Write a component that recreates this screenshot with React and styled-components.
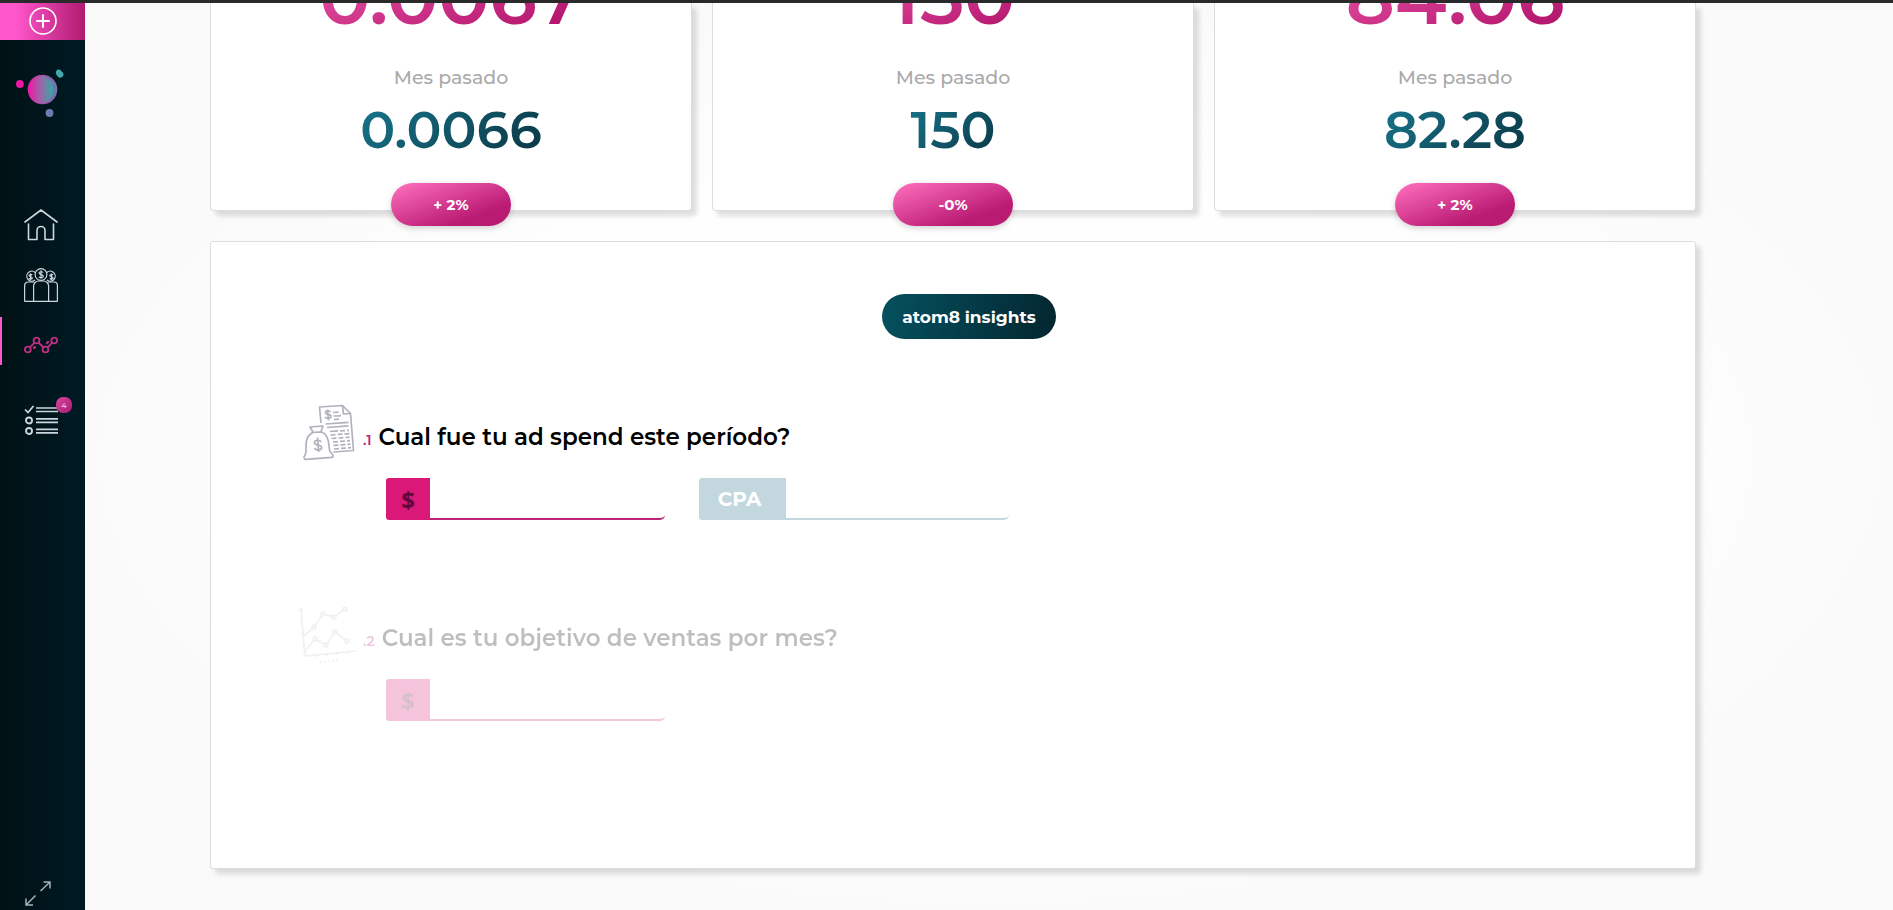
import React from "react";
import styled, { createGlobalStyle, css } from "styled-components";

const Global = createGlobalStyle`
  *, *::before, *::after { box-sizing: border-box; }
  body {
    margin: 0;
    background: #fafafa;
    font-family: Montserrat, Inter, "Open Sans", sans-serif;
    color: #000;
  }
  button, input { font: inherit; }
  h2, p { margin: 0; }
`;

const Page = styled.div`
  display: grid;
  grid-template-columns: 85px minmax(0, 1fr);
  height: 100vh;
  overflow: hidden;
  border-top: 3px solid #2a2a2a;
`;

const Sidebar = styled.aside`
  display: flex;
  flex-direction: column;
  align-items: stretch;
  min-height: 0;
  background: linear-gradient(90deg, #001114, #001a24);
`;

const AddButton = styled.button`
  display: flex;
  justify-content: center;
  align-items: flex-start;
  height: 37px;
  padding: 4px 0 0;
  border: 0;
  color: #fff;
  background: linear-gradient(90deg, #ff56cc 18%, #b01b70);
`;

const Logo = styled.a`
  display: flex;
  justify-content: center;
  margin: 24px 0 83px;
`;

const Nav = styled.nav`
  display: flex;
  flex-direction: column;
`;

const NavLink = styled.a`
  display: flex;
  align-items: center;
  height: 48px;
  margin-bottom: ${(p) => p.$gap}px;
  padding-top: ${(p) => (p.$active ? 8 : 0)}px;
  padding-left: ${(p) => (p.$active ? 22 : 24)}px;
  border-left: ${(p) => (p.$active ? "2px solid #ff56cc" : "0")};
  color: ${(p) => (p.$active ? "#b8307f" : "#ccd6dc")};
`;

const IconWrap = styled.span`
  position: relative;
  display: flex;
`;

const Count = styled.span`
  position: absolute;
  top: -8px;
  right: -14px;
  width: 16px;
  height: 16px;
  border-radius: 7px;
  background: linear-gradient(135deg, #d9449f, #a81c72);
  color: #f0a8d3;
  font-size: 8px;
  font-weight: 600;
  line-height: 16px;
  text-align: center;
`;

const ExpandButton = styled.button`
  display: flex;
  margin-top: auto;
  padding: 0 0 4px 25px;
  border: 0;
  background: none;
  color: #a4b1b6;
`;

const Main = styled.main`
  display: flex;
  flex-direction: column;
  gap: 30px;
  min-width: 0;
  padding: 0 197px 40px 125px;
  background: radial-gradient(ellipse at 50% 50%, #fefefe 45%, #fafafa 72%);
`;

const surface = css`
  border: 1px solid #dcdddd;
  background: #fff;
  box-shadow: 5px 5px 5px rgba(0, 0, 0, 0.13);
`;

const Metrics = styled.section`
  display: grid;
  grid-template-columns: repeat(3, minmax(0, 1fr));
  gap: 20px;
`;

const Metric = styled.article`
  ${surface}
  display: flex;
  flex-direction: column;
  align-items: center;
  height: 208px;
  border-top: 0;
  border-radius: 0 0 4px 4px;
`;

const gradientText = css`
  background-clip: text;
  -webkit-background-clip: text;
  color: transparent;
`;

const Current = styled.p`
  ${gradientText}
  margin-top: -62px;
  background-image: linear-gradient(160deg, #f25fb0, #b5186f 80%);
  font-size: 76px;
  font-weight: 600;
  line-height: 112px;
`;

const Label = styled.p`
  margin-top: 11px;
  color: #aaa;
  font-size: 19px;
  font-weight: 500;
  line-height: 28px;
`;

const Previous = styled.p`
  ${gradientText}
  margin-top: 8px;
  background-image: linear-gradient(135deg, #18768c, #0a3543);
  font-size: 52px;
  font-weight: 600;
  line-height: 60px;
`;

const Change = styled.span`
  width: 25%;
  height: 43px;
  margin-top: 23px;
  flex: none;
  border-radius: 22px;
  background: linear-gradient(160deg, #fb6bba 5%, #b91a72 75%);
  box-shadow: 0 2px 6px rgba(0, 0, 0, 0.18);
  color: #fff;
  font-size: 15px;
  font-weight: 700;
  line-height: 43px;
  text-align: center;
`;

const Panel = styled.section`
  ${surface}
  display: flex;
  flex-direction: column;
  min-height: 628px;
  padding: 52px 56px 0 88px;
  border-radius: 3px;
`;

const InsightsButton = styled.button`
  align-self: center;
  height: 45px;
  padding: 0 20px;
  border: 0;
  border-radius: 23px;
  background: linear-gradient(100deg, #05515f, #03262f);
  color: #fff;
  font-size: 17px;
  font-weight: 700;
`;

const Question = styled.section`
  margin-top: ${(p) => p.$top}px;
  opacity: ${(p) => (p.$faded ? 0.25 : 1)};
`;

const QuestionHead = styled.div`
  display: flex;
  height: 60px;
`;

const QuestionIcon = styled.span`
  display: flex;
  width: 64px;
  opacity: ${(p) => (p.$faint ? 0.6 : 1)};
`;

const Title = styled.h2`
  display: flex;
  align-items: baseline;
  gap: 7px;
  padding-top: 17px;
  font-size: 23px;
  font-weight: 600;
  line-height: 32px;
`;

const Step = styled.span`
  color: #c2207c;
  font-size: 14px;
`;

const Fields = styled.div`
  display: flex;
  gap: 34px;
  margin: 14px 0 0 87px;
`;

const Field = styled.label`
  display: flex;
  width: ${(p) => (p.$muted ? 310 : 279)}px;
  height: 42px;
  color: ${(p) => (p.$muted ? "#c2d8de" : "#d91878")};
`;

const Prefix = styled.span`
  display: flex;
  align-items: center;
  justify-content: center;
  width: ${(p) => (p.$muted ? 87 : 44)}px;
  padding-right: ${(p) => (p.$muted ? 6 : 0)}px;
  flex: none;
  border-radius: 3px 0 0 3px;
  background: currentColor;
  font-family: ${(p) => (p.$muted ? "inherit" : '"Noto Sans", sans-serif')};
  font-size: ${(p) => (p.$muted ? 20 : 24)}px;
  font-weight: 700;

  span { color: ${(p) => (p.$muted ? "#fff" : "#5f0738")}; }
`;

const Input = styled.input`
  flex: 1;
  min-width: 0;
  padding: 0 10px;
  border: 0;
  border-bottom: 2px solid ${(p) => (p.$muted ? "#c2d8de" : "#bd2577")};
  border-radius: 0 0 5px 0;
  outline: 0;
  background: transparent;
  font-size: 18px;
`;

const PlusIcon = () => (
  <svg width="28" height="28" viewBox="0 0 28 28" fill="none" stroke="currentColor" strokeWidth="2" strokeLinecap="round" aria-hidden="true">
    <circle cx="14" cy="14" r="13" strokeWidth="1.6" />
    <path d="M14 8v12M8 14h12" />
  </svg>
);

const LogoMark = () => (
  <svg width="54" height="54" viewBox="0 0 54 54" role="img" aria-label="atom8">
    <defs>
      <linearGradient id="orb" x1="0" x2="1">
        <stop offset="0.05" stopColor="#ea1ca5" />
        <stop offset="0.45" stopColor="#a460a8" />
        <stop offset="1" stopColor="#32aaa6" />
      </linearGradient>
      <linearGradient id="rim" x1="0" x2="1">
        <stop offset="0.3" stopColor="#d02cac" />
        <stop offset="1" stopColor="#687ead" />
      </linearGradient>
    </defs>
    <circle cx="26.500" cy="25.500" r="14.800" fill="url(#rim)" />
    <ellipse cx="24.800" cy="25.500" rx="12.500" ry="14" fill="url(#orb)" />
    <circle cx="3.900" cy="20" r="3.900" fill="#ed17a5" />
    <path d="M40 7.500c1-3 5-2.500 5.500 0 2 .8 2.600 3 1.500 4.800-1.500 2-4.500 1.800-5.500-.4-1.200-1-2-2.500-1.500-4.400z" fill="#43a9ad" />
    <circle cx="33.500" cy="49" r="3.900" fill="#6d7caf" />
  </svg>
);

const HomeIcon = () => (
  <svg width="34" height="32" viewBox="0 0 34 32" fill="none" stroke="currentColor" strokeWidth="1.600" strokeLinecap="round" strokeLinejoin="round" aria-hidden="true">
    <path d="M1 13 17 1l16 12M4.500 15v15.500H13V21.500a4 4 0 0 1 8 0v9h8.500V15" />
  </svg>
);

const PeopleIcon = () => (
  <svg width="34" height="34" viewBox="0 0 34 34" fill="none" stroke="currentColor" strokeWidth="1.200" aria-hidden="true">
    <circle cx="17" cy="6.500" r="5.900" />
    <path d="M11.200 4.500A5 5 0 1 0 11 12M22.800 4.500A5 5 0 1 1 23 12" />
    <path d="M.6 33.400V17.500a3.500 3.500 0 0 1 3.500-3.500h6M33.400 33.400V17.500a3.500 3.500 0 0 0-3.500-3.500h-6M.6 33.400h32.800M9.600 33V18a5 5 0 0 1 5-5h5a5 5 0 0 1 5 5v15" />
    <path d="M19.200 4.500c-.6-1-4.200-1.200-4.200.6 0 2 4.300 1 4.300 3.100 0 1.900-3.800 1.700-4.500.5M17 2.200v8.600" />
    <path d="M8.200 7c-.7-.8-3.200-.8-3.200.6s3.300.9 3.300 2.300-2.700 1.400-3.400.5M6.600 5.400v6.600M29 7c-.7-.8-3.200-.8-3.200.6s3.300.9 3.300 2.300-2.700 1.400-3.400.5M27.400 5.400v6.600" />
  </svg>
);

const TrendIcon = () => (
  <svg width="34" height="18" viewBox="0 0 34 18" fill="none" stroke="currentColor" strokeWidth="1.900" aria-hidden="true">
    <circle cx="3.800" cy="13.500" r="2.900" />
    <circle cx="12.500" cy="4.500" r="2.900" />
    <circle cx="21.500" cy="13.500" r="2.900" />
    <circle cx="30.200" cy="4.500" r="2.900" />
    <path d="m6 11.300 4.300-4.500M14.600 6.800l4.700 4.500M23.700 11.300l4.300-4.500" />
    <path d="m10 12 1-1M23 7l1-1" strokeWidth="2.400" strokeLinecap="round" />
  </svg>
);

const TasksIcon = () => (
  <svg width="34" height="30" viewBox="0 0 34 30" fill="none" stroke="currentColor" aria-hidden="true">
    <path d="m1 4.500 3 3 5.500-6.500" strokeWidth="1.700" />
    <circle cx="5" cy="15.500" r="3" strokeWidth="1.900" />
    <circle cx="5" cy="26" r="3" strokeWidth="1.900" />
    <path d="M12 3h22M12 6.500h22M12 13.800h22M12 17.300h22M12 24.300h22M12 27.800h22" strokeWidth="1.700" />
  </svg>
);

const ExpandIcon = () => (
  <svg width="26" height="25" viewBox="0 0 26 25" fill="none" stroke="currentColor" strokeWidth="1.500" aria-hidden="true">
    <path d="m15.500 10 9.500-9M18.500 1H25v6.500M10.500 14.500 1 24M1 17.500V24h7" />
  </svg>
);

const InvoiceIcon = () => (
  <svg width="56" height="58" viewBox="-2 0 56 58" fill="none" stroke="#b0b2bd" strokeWidth="1.700" strokeLinejoin="round" aria-hidden="true">
    <path d="M20 19 18.500 3l23-1.500 8 8 3 37-20 1.500" />
    <path d="m41.500 1.500 1 8.500 7-.500" />
    <path d="m24.500 20 23-1.600M26 23.500l21.500-1.600M29 27.500l8-.6" />
    <path d="m29.500 31 19-1.300M30.500 34.500l18-1.300M32 38l17-1.300M32.500 41.500l17-1.300M33 45l17-1.300M39 27l9-.7" strokeDasharray="5 2" />
    <path d="M29.500 8c-1-2-5.500-1.500-5 .8.400 2.200 5.300 1 5.500 3.500.2 2.600-5 2.800-5.800.6M26.500 5.500l1 11M32 8.500l5.500-.3M32.500 12h3.500l4-.4M33 15.500l5-.3" />
    <path d="m12 28-3-5 13-1-2 5.500M11.500 28.500l9-.7M11.500 28.500C6 32 5 36 5 42.500c0 4 .2 7-1 8.500-1.800 2.300-1 4.500 1 4.300l25.500-2c2.300-.3 2-3-.5-4.600-1.300-1-1.800-4-2-7C27.500 34 25 29.500 20.500 28" />
    <path d="M20 38c-1-2.600-6.800-2.300-6.500.8.300 2.900 7 1.500 7.200 4.700.2 3-6 3.500-7.200.6M16.500 33.500l1.200 14.500" />
  </svg>
);

const ChartIcon = () => (
  <svg width="59" height="60" viewBox="0 0 59 60" fill="none" stroke="#9da2b4" strokeWidth="1.700" aria-hidden="true">
    <path d="M2 3 6 51l51-5M0 5h4M1 17h3M2 29h3M3 41h3M17 49v3M28 48v3M38 47v3M49 46v3" />
    <path d="M5 31 15 22 24 9l11 3 11-8M6 46l10-12 11 6 9-13 12 9" />
    <path d="m21 57 20-2" strokeDasharray="2 2" />
    <g fill="#fff">
      <circle cx="15" cy="22" r="1.800" />
      <circle cx="24" cy="9" r="1.800" />
      <circle cx="35" cy="12" r="1.800" />
      <circle cx="46" cy="4" r="1.800" />
      <circle cx="16" cy="34" r="1.800" />
      <circle cx="27" cy="40" r="1.800" />
      <circle cx="36" cy="27" r="1.800" />
      <circle cx="48" cy="36" r="1.800" />
    </g>
  </svg>
);

const metrics = [
  { current: "0.0067", previous: "0.0066", change: "+ 2%" },
  { current: "150", previous: "150", change: "-0%" },
  { current: "84.06", previous: "82.28", change: "+ 2%" },
];

function AmountField({ label, prefix, muted, disabled }) {
  return (
    <Field $muted={muted}>
      <Prefix $muted={muted}><span>{prefix}</span></Prefix>
      <Input $muted={muted} type="text" aria-label={label} disabled={disabled} />
    </Field>
  );
}

export default function App() {
  return (
    <>
      <Global />
      <Page>
        <Sidebar>
          <AddButton type="button" aria-label="Agregar"><PlusIcon /></AddButton>
          <Logo href="#inicio"><LogoMark /></Logo>
          <Nav aria-label="Principal">
            <NavLink href="#home" aria-label="Inicio" $gap={12}><HomeIcon /></NavLink>
            <NavLink href="#clientes" aria-label="Clientes" $gap={8}><PeopleIcon /></NavLink>
            <NavLink href="#metricas" aria-label="Métricas" $gap={31} $active><TrendIcon /></NavLink>
            <NavLink href="#tareas" aria-label="Tareas" $gap={0}>
              <IconWrap><TasksIcon /><Count>4</Count></IconWrap>
            </NavLink>
          </Nav>
          <ExpandButton type="button" aria-label="Expandir"><ExpandIcon /></ExpandButton>
        </Sidebar>
        <Main>
          <Metrics>
            {metrics.map((m, i) => (
              <Metric key={i}>
                <Current>{m.current}</Current>
                <Label>Mes pasado</Label>
                <Previous>{m.previous}</Previous>
                <Change>{m.change}</Change>
              </Metric>
            ))}
          </Metrics>
          <Panel>
            <InsightsButton type="button">atom8 insights</InsightsButton>
            <Question $top={65}>
              <QuestionHead>
                <QuestionIcon><InvoiceIcon /></QuestionIcon>
                <Title><Step>.1</Step>Cual fue tu ad spend este período?</Title>
              </QuestionHead>
              <Fields>
                <AmountField label="Ad spend" prefix="$" />
                <AmountField label="CPA" prefix="CPA" muted disabled />
              </Fields>
            </Question>
            <Question $top={85} $faded>
              <QuestionHead>
                <QuestionIcon $faint><ChartIcon /></QuestionIcon>
                <Title><Step>.2</Step>Cual es tu objetivo de ventas por mes?</Title>
              </QuestionHead>
              <Fields>
                <AmountField label="Objetivo de ventas" prefix="$" />
              </Fields>
            </Question>
          </Panel>
        </Main>
      </Page>
    </>
  );
}
